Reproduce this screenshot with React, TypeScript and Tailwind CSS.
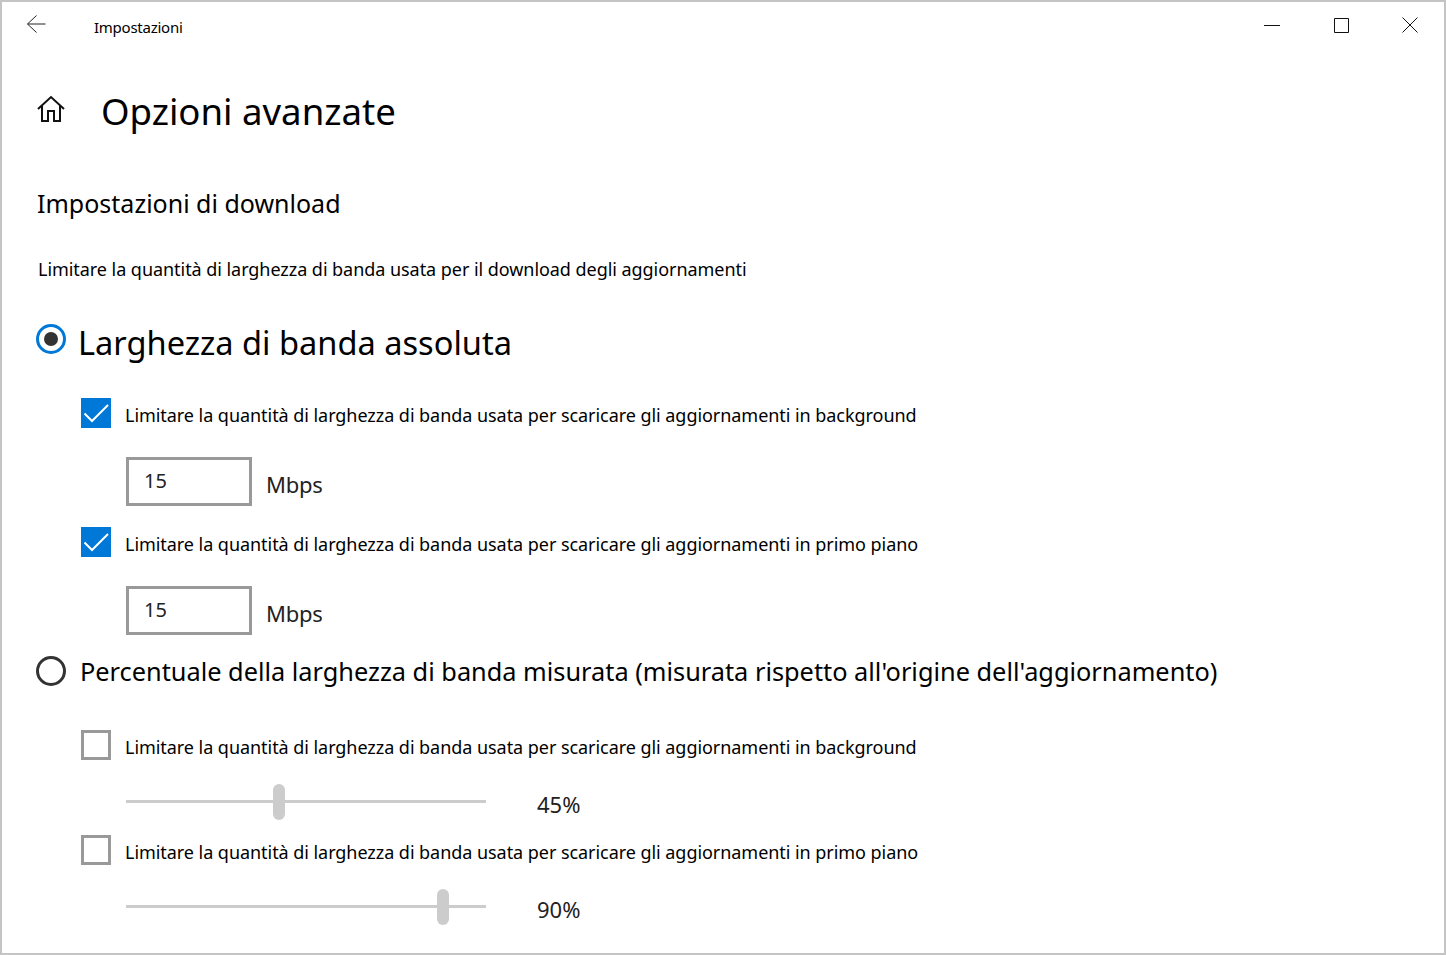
function Radio({ checked }: { checked?: boolean }) {
  return (
    <span
      className={`flex h-[30px] w-[30px] shrink-0 items-center justify-center rounded-full border-[3px] ${
        checked ? 'border-[#0078d7]' : 'border-[#333333]'
      }`}
    >
      {checked && <span className="h-[14px] w-[14px] rounded-full bg-[#333333]" />}
    </span>
  );
}

function Checkbox({ checked, label }: { checked?: boolean; label: string }) {
  return (
    <div className="ml-[79px] flex h-[30px] items-center">
      {checked ? (
        <span className="flex h-[30px] w-[30px] shrink-0 items-center justify-center bg-[#0078d7]">
          <svg width="30" height="30" viewBox="0 0 30 30" fill="none">
            <path d="M3.5 15.5 L11 23 L27 7" stroke="#fff" strokeWidth="2" />
          </svg>
        </span>
      ) : (
        <span className="h-[30px] w-[30px] shrink-0 border-[3px] border-[#999999]" />
      )}
      <span className="mt-[4px] ml-[14px] text-[18px] leading-[24px] tracking-[-0.05px] whitespace-nowrap">{label}</span>
    </div>
  );
}

function Speed() {
  return (
    <div className="mt-[29px] ml-[124px] flex h-[49px]">
      <div className="h-[49px] w-[126px] border-[3px] border-[#999999] pl-[15px] text-[20px] leading-[42px] text-[#222222]">
        15
      </div>
      <span className="mt-[12px] ml-[14px] text-[22px] leading-[30px] tracking-[-0.25px] text-[#222222]">Mbps</span>
    </div>
  );
}

function Slider({ value, offset }: { value: string; offset: number }) {
  return (
    <div className="mt-[24px] ml-[124px] flex h-[36px] items-start">
      <div className="relative mt-[16px] h-[3px] w-[360px] bg-[#cccccc]">
        <span
          className="absolute top-[-16px] h-[36px] w-[12px] rounded-[6px] bg-[#cccccc]"
          style={{ left: offset }}
        />
      </div>
      <span className="mt-[5px] ml-[51px] text-[22px] leading-[30px] text-[#222222]">{value}</span>
    </div>
  );
}

const background = 'Limitare la quantità di larghezza di banda usata per scaricare gli aggiornamenti in background';
const foreground = 'Limitare la quantità di larghezza di banda usata per scaricare gli aggiornamenti in primo piano';

export default function App() {
  return (
    <div className="h-[955px] w-[1446px] overflow-hidden border-2 border-[#c4c4c4] bg-white font-['Noto_Sans','Open_Sans',sans-serif] text-black">
      <div className="flex h-[50px] items-center">
        <svg width="20" height="20" viewBox="0 0 20 20" fill="none" stroke="#222" strokeWidth="1" className="mt-[-6px] ml-[24px]">
          <path d="M1.5 10 H19.5 M10.5 1.5 L1.5 10 L10.5 18.5" />
        </svg>
        <span className="ml-[48px] text-[15px] leading-[20px] tracking-[-0.25px]">Impostazioni</span>
        <div className="ml-auto mt-[-5px] flex items-center pr-[26px]">
          <svg width="16" height="16" viewBox="0 0 16 16" fill="none" stroke="#111" strokeWidth="1">
            <path d="M0 8.5 H16" />
          </svg>
          <svg width="16" height="16" viewBox="0 0 16 16" fill="none" stroke="#111" strokeWidth="1" className="ml-[53px]">
            <path d="M1.5 1.5 H15.5 V15.5 H1.5 Z" />
          </svg>
          <svg width="16" height="16" viewBox="0 0 16 16" fill="none" stroke="#111" strokeWidth="1" className="ml-[53px]">
            <path d="M0.5 0.5 L15.5 15.5 M15.5 0.5 L0.5 15.5" />
          </svg>
        </div>
      </div>

      <div className="mt-[34px] flex h-[52px] items-center">
        <svg width="30" height="28" viewBox="0 0 30 28" fill="none" stroke="#111" strokeWidth="2" className="mt-[-6px] ml-[34px]">
          <path d="M2 14 L15 2 L28 14 M6 11 V26 H12 V16 H18 V26 H24 V11" />
        </svg>
        <h1 className="mt-[-2px] ml-[35px] text-[36.6px] leading-[52px] font-normal">Opzioni avanzate</h1>
      </div>

      <h2 className="mt-[47px] ml-[35px] text-[25px] leading-[36px] font-normal">Impostazioni di download</h2>

      <p className="mt-[36px] ml-[36px] text-[18px] leading-[24px] tracking-[-0.05px]">
        Limitare la quantità di larghezza di banda usata per il download degli aggiornamenti
      </p>

      <div className="mt-[43px] ml-[34px] flex h-[30px] items-center">
        <Radio checked />
        <span className="mt-[8px] ml-[12px] text-[32.6px] leading-[44px] whitespace-nowrap">Larghezza di banda assoluta</span>
      </div>

      <div className="mt-[44px]">
        <Checkbox checked label={background} />
      </div>
      <Speed />
      <div className="mt-[21px]">
        <Checkbox checked label={foreground} />
      </div>
      <Speed />

      <div className="mt-[21px] ml-[34px] flex h-[30px] items-center">
        <Radio />
        <span className="ml-[14px] text-[25.33px] leading-[36px] whitespace-nowrap">
          Percentuale della larghezza di banda misurata (misurata rispetto all'origine dell'aggiornamento)
        </span>
      </div>

      <div className="mt-[44px]">
        <Checkbox label={background} />
      </div>
      <Slider value="45%" offset={147} />
      <div className="mt-[15px]">
        <Checkbox label={foreground} />
      </div>
      <Slider value="90%" offset={311} />
    </div>
  );
}
